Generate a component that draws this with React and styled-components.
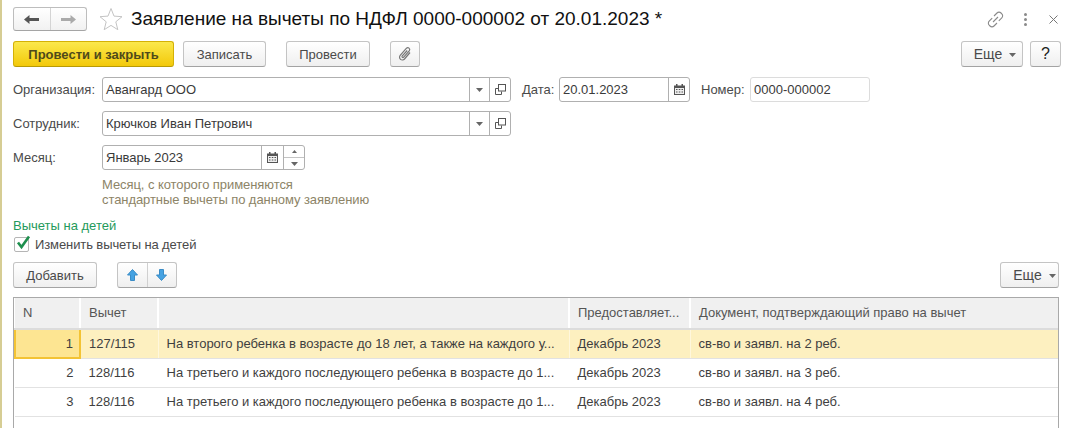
import styled, { createGlobalStyle } from 'styled-components'

const GlobalStyle = createGlobalStyle`
  html, body {
    margin: 0;
    height: 100%;
    overflow: hidden;
    background: #fff;
  }
  * {
    box-sizing: border-box;
  }
`

const rows = [
  { n: 1, code: '127/115', text: 'На второго ребенка в возрасте до 18 лет, а также на каждого у...', month: 'Декабрь 2023', doc: 'св-во и заявл. на 2 реб.', active: true },
  { n: 2, code: '128/116', text: 'На третьего и каждого последующего ребенка в возрасте до 1...', month: 'Декабрь 2023', doc: 'св-во и заявл. на 3 реб.' },
  { n: 3, code: '128/116', text: 'На третьего и каждого последующего ребенка в возрасте до 1...', month: 'Декабрь 2023', doc: 'св-во и заявл. на 4 реб.' },
]

function Caret() {
  return (
    <svg width="7" height="4" viewBox="0 0 7 4"><path d="M0 0h7L3.5 4z" fill="#666" /></svg>
  )
}

function OpenIcon() {
  return (
    <svg width="11" height="11" viewBox="0 0 11 11" fill="none" stroke="#555" strokeWidth="1">
      <rect x="3.5" y="0.5" width="7" height="6.5" />
      <path d="M3.5 4.5H.5v6h6V7.5" />
    </svg>
  )
}

function CalendarIcon() {
  return (
    <svg width="11" height="11" viewBox="0 0 11 11">
      <path d="M0 1.5h11V11H0z" fill="#555" />
      <path d="M2 0h1.5v2H2zM7.5 0H9v2H7.5z" fill="#555" />
      <path d="M1 4h9v6H1z" fill="#eee" />
      <path d="M2 5h1.5v1H2zM4.8 5h1.5v1H4.8zM7.5 5H9v1H7.5zM2 7.5h1.5v1H2zM4.8 7.5h1.5v1H4.8zM7.5 7.5H9v1H7.5z" fill="#555" />
    </svg>
  )
}

function BlueArrow({ down }) {
  return (
    <svg width="11" height="12" viewBox="0 0 11 12" style={{ transform: down ? 'rotate(180deg)' : undefined }}>
      <path d="M5.5 .5L10.500 6H7.500V11.500H3.500V6H.5z" fill="#45a2e2" stroke="#3a8cc6" strokeWidth="1" strokeLinejoin="round" />
    </svg>
  )
}

function Field({ width, value, muted, children }) {
  return (
    <InputBox $width={width} $muted={muted}>
      <InputText>{value}</InputText>
      {children}
    </InputBox>
  )
}

export default function App() {
  return (
    <>
      <GlobalStyle />
      <Page>
        <TitleBar>
          <NavGroup>
            <NavButton>
              <svg width="15" height="9" viewBox="0 0 15 9"><path d="M0 4.5L5.5 0v3H15v3H5.5v3z" fill="#555" /></svg>
            </NavButton>
            <NavButton $off>
              <svg width="15" height="9" viewBox="0 0 15 9"><path d="M15 4.5L9.5 0v3H0v3h9.5v3z" fill="#aaa" /></svg>
            </NavButton>
          </NavGroup>
          <StarIcon width="24" height="24" viewBox="0 0 24 24">
            <path d="M12 1.5l3 7.6 8 .6-6.200 5.100 2 7.900L12 18.400l-6.800 4.300 2-7.900L1 9.700l8-.6z" fill="#fff" stroke="#c4c4c4" strokeWidth="1" />
          </StarIcon>
          <Title>Заявление на вычеты по НДФЛ 0000-000002 от 20.01.2023 *</Title>
          <WindowTools>
            <svg width="17" height="17" viewBox="0 0 17 17" fill="none" stroke="#8a8a8a" strokeWidth="1.100">
              <path d="M7 5l3-3a2.800 2.800 0 0 1 4 0l.8.8a2.800 2.800 0 0 1 0 4l-3 3" />
              <path d="M10 12l-3 3a2.800 2.800 0 0 1-4 0l-.8-.8a2.800 2.800 0 0 1 0-4l3-3" />
              <path d="M6 11l5-5" />
            </svg>
            <Dots>
              <i /><i /><i />
            </Dots>
            <CloseIcon width="9" height="9" viewBox="0 0 9 9" stroke="#777" strokeWidth="1"><path d="M.5.5l8 8M8.500.5l-8 8" /></CloseIcon>
          </WindowTools>
        </TitleBar>

        <Toolbar>
          <PrimaryButton>Провести и закрыть</PrimaryButton>
          <Button $width={83}>Записать</Button>
          <Button $width={84} $left={11}>Провести</Button>
          <Button $width={30} $left={11}>
            <svg width="14" height="16" viewBox="0 0 14 16" fill="none" stroke="#777" strokeWidth="1.200">
              <path d="M12 6.500L6.500 13a2.800 2.800 0 0 1-4.300-3.600L8.500 2.200a1.900 1.900 0 0 1 2.900 2.400L5.500 11.300a.9.900 0 0 1-1.400-1.100L9.200 4.500" />
            </svg>
          </Button>
          <Spacer />
          <MoreButton $width={62} $pad={6}>Еще<SmallCaret><Caret /></SmallCaret></MoreButton>
          <HelpButton $width={31} $left={-2}>?</HelpButton>
        </Toolbar>

        <FirstRow>
          <Label>Организация:</Label>
          <Field width={409} value="Авангард ООО">
            <InputAction $width={20}><Caret /></InputAction>
            <InputAction $width={21}><OpenIcon /></InputAction>
          </Field>
          <InlineLabel $width={37} $left={11}>Дата:</InlineLabel>
          <Field width={131} value="20.01.2023">
            <InputAction $width={21}><CalendarIcon /></InputAction>
          </Field>
          <InlineLabel $width={49} $left={11}>Номер:</InlineLabel>
          <Field width={120} value="0000-000002" muted />
        </FirstRow>

        <FormRow>
          <Label>Сотрудник:</Label>
          <Field width={409} value="Крючков Иван Петрович">
            <InputAction $width={20}><Caret /></InputAction>
            <InputAction $width={21}><OpenIcon /></InputAction>
          </Field>
        </FormRow>

        <FormRow>
          <Label>Месяц:</Label>
          <Field width={203} value="Январь 2023">
            <InputAction $width={22}><CalendarIcon /></InputAction>
            <Spinner>
              <SpinPart><svg width="5" height="3" viewBox="0 0 5 3"><path d="M2.500 0L5 3H0z" fill="#666" /></svg></SpinPart>
              <SpinPart><Caret /></SpinPart>
            </Spinner>
          </Field>
        </FormRow>

        <Hint>
          Месяц, с которого применяются<br />
          стандартные вычеты по данному заявлению
        </Hint>

        <SectionTitle>Вычеты на детей</SectionTitle>
        <CheckRow>
          <CheckBox>
            <CheckMark width="16" height="15" viewBox="0 0 16 15">
              <path d="M3 7.500L6.500 12 14 1.500" fill="none" stroke="#1e8f4e" strokeWidth="2.600" />
            </CheckMark>
          </CheckBox>
          Изменить вычеты на детей
        </CheckRow>

        <TableToolbar>
          <Button $width={84}>Добавить</Button>
          <ArrowGroup>
            <ArrowButton><BlueArrow /></ArrowButton>
            <ArrowButton><BlueArrow down /></ArrowButton>
          </ArrowGroup>
          <Spacer />
          <MoreButton $width={59} $pad={10}>Еще<SmallCaret><Caret /></SmallCaret></MoreButton>
        </TableToolbar>

        <TableFrame>
          <Table>
            <colgroup>
              <col style={{ width: 65 }} />
              <col style={{ width: 78 }} />
              <col style={{ width: 411 }} />
              <col style={{ width: 121 }} />
              <col />
            </colgroup>
            <thead>
              <tr>
                <HeadCell>N</HeadCell>
                <HeadCell>Вычет</HeadCell>
                <HeadCell />
                <HeadCell>Предоставляет...</HeadCell>
                <HeadCell>Документ, подтверждающий право на вычет</HeadCell>
              </tr>
            </thead>
            <tbody>
              {rows.map(row => (
                <tr key={row.n}>
                  <NumberCell $active={row.active}>{row.n}</NumberCell>
                  <Cell $active={row.active}>{row.code}</Cell>
                  <Cell $active={row.active}>{row.text}</Cell>
                  <Cell $active={row.active}>{row.month}</Cell>
                  <Cell $active={row.active}>{row.doc}</Cell>
                </tr>
              ))}
            </tbody>
          </Table>
        </TableFrame>
      </Page>
    </>
  )
}

const Page = styled.div`
  height: 428px;
  width: 1079px;
  overflow: hidden;
  padding: 7px 18px 0 11px;
  border-left: 2px solid #d6cd94;
  font-family: "Liberation Sans", Arial, sans-serif;
  font-size: 13px;
  color: #4a4a4a;
`

const TitleBar = styled.div`
  display: flex;
  align-items: center;
  height: 24px;
`

const NavGroup = styled.div`
  display: flex;
  width: 74px;
  height: 24px;
  border: 1px solid #bdbdbd;
  border-bottom-color: #a5a5a5;
  border-radius: 3px;
  background: linear-gradient(#fff, #f1f1f1);
`

const NavButton = styled.div`
  flex: 1;
  display: flex;
  align-items: center;
  justify-content: center;
  border-left: ${p => (p.$off ? '1px solid #d4d4d4' : 'none')};
`

const StarIcon = styled.svg`
  margin-left: 12px;
`

const Title = styled.div`
  margin-left: 8px;
  font-size: 19px;
  color: #111;
  white-space: nowrap;
`

const WindowTools = styled.div`
  margin-left: auto;
  margin-right: 3px;
  display: flex;
  align-items: center;
  gap: 20px;
`

const CloseIcon = styled.svg`
  margin-left: 2px;
`

const Dots = styled.div`
  display: flex;
  flex-direction: column;
  gap: 2px;

  i {
    display: block;
    width: 3px;
    height: 3px;
    border-radius: 50%;
    background: #8a8a8a;
  }
`

const Toolbar = styled.div`
  display: flex;
  align-items: center;
  gap: 9px;
  margin-top: 10px;
  height: 26px;
`

const Spacer = styled.div`
  flex: 1;
`

const Button = styled.div`
  display: flex;
  align-items: center;
  justify-content: center;
  flex: none;
  width: ${p => p.$width}px;
  height: 26px;
  margin-left: ${p => p.$left || 0}px;
  border: 1px solid #c4c4c4;
  border-bottom-color: #a3a3a3;
  border-radius: 3px;
  background: linear-gradient(#fff, #efefef);
  color: #4a4a4a;
  white-space: pre;
`

const PrimaryButton = styled(Button)`
  width: 161px;
  border-color: #d4b106;
  border-bottom-color: #b89a05;
  background: linear-gradient(#fbe84c, #f3c90a);
  color: #4f4a1a;
  font-weight: bold;
`

const MoreButton = styled(Button)`
  padding-left: ${p => p.$pad}px;
  font-size: 14px;
`

const HelpButton = styled(Button)`
  font-size: 16px;
  color: #222;
`

const SmallCaret = styled.span`
  display: inline-flex;
  margin-left: 7px;
  margin-top: 1px;
`

const FormRow = styled.div`
  display: flex;
  align-items: center;
  height: 25px;
  margin-top: 9px;
`

const FirstRow = styled(FormRow)`
  margin-top: 10px;
`

const Label = styled.div`
  width: 89px;
  flex: none;
  white-space: nowrap;
`

const InlineLabel = styled.div`
  width: ${p => p.$width}px;
  flex: none;
  margin-left: ${p => p.$left}px;
  white-space: nowrap;
`

const InputBox = styled.div`
  display: flex;
  flex: none;
  width: ${p => p.$width}px;
  height: 25px;
  border: 1px solid ${p => (p.$muted ? '#dcdcdc' : '#b0b0b0')};
  border-radius: 3px;
  background: #fff;
`

const InputText = styled.div`
  flex: 1;
  display: flex;
  align-items: center;
  padding-left: 3px;
  color: #3a3a3a;
  white-space: nowrap;
`

const InputAction = styled.div`
  display: flex;
  align-items: center;
  justify-content: center;
  flex: none;
  width: ${p => p.$width}px;
  border-left: 1px solid #b0b0b0;
`

const Spinner = styled.div`
  display: flex;
  flex-direction: column;
  flex: none;
  width: 21px;
  border-left: 1px solid #b0b0b0;
`

const SpinPart = styled.div`
  flex: 1;
  display: flex;
  align-items: center;
  justify-content: center;

  & + & {
    border-top: 1px solid #c4c4c4;
  }
`

const Hint = styled.div`
  margin: 7px 0 0 89px;
  line-height: 15px;
  letter-spacing: -0.07px;
  color: #8d8467;
`

const SectionTitle = styled.div`
  margin-top: 11px;
  line-height: 15px;
  color: #1f9a5b;
`

const CheckRow = styled.div`
  display: flex;
  align-items: center;
  height: 16px;
  margin-top: 3px;
  padding-left: 1px;
  letter-spacing: -0.1px;
`

const CheckBox = styled.div`
  position: relative;
  width: 15px;
  height: 15px;
  margin-right: 6px;
  border: 1px solid #b5b5b5;
  border-radius: 2px;
  background: #fff;
`

const CheckMark = styled.svg`
  position: absolute;
  top: -3px;
  left: 0;
`

const TableToolbar = styled.div`
  display: flex;
  align-items: center;
  height: 26px;
  margin-top: 10px;
  margin-right: 2px;
`

const ArrowGroup = styled.div`
  display: flex;
  width: 60px;
  height: 26px;
  margin-left: 20px;
  border: 1px solid #c4c4c4;
  border-bottom-color: #a3a3a3;
  border-radius: 3px;
  background: linear-gradient(#fff, #efefef);
`

const ArrowButton = styled.div`
  flex: 1;
  display: flex;
  align-items: center;
  justify-content: center;

  & + & {
    border-left: 1px solid #d0d0d0;
  }
`

const TableFrame = styled.div`
  height: 140px;
  margin-top: 9px;
  margin-right: 2px;
  border: 1px solid #a9a9a9;
  border-bottom: none;
`

const Table = styled.table`
  width: 100%;
  table-layout: fixed;
  border-collapse: collapse;
`

const HeadCell = styled.th`
  height: 31px;
  padding: 0 4px 2px 8px;
  background: #f0f0f0;
  border-right: 2px solid #fff;
  border-bottom: 2px solid #dcdcdc;
  font-weight: normal;
  font-size: 13px;
  text-align: left;
  color: #555;
  white-space: nowrap;

  &:last-child {
    border-right: none;
  }
`

const Cell = styled.td`
  height: 29px;
  padding: 0 8px;
  background: ${p => (p.$active ? '#fdf0c0' : '#fff')};
  border-right: 1px solid ${p => (p.$active ? '#fff7dc' : '#fff')};
  border-bottom: 1px solid #e2e2e2;
  font-size: 13px;
  color: #3f3f3f;
  white-space: nowrap;

  &:last-child {
    border-right: none;
  }
`

const NumberCell = styled(Cell)`
  padding: 0 6px 0 0;
  text-align: right;
  background: ${p => (p.$active ? '#fde592' : '#fff')};
  border: ${p => (p.$active ? '2px solid #f3c334' : undefined)};
`
